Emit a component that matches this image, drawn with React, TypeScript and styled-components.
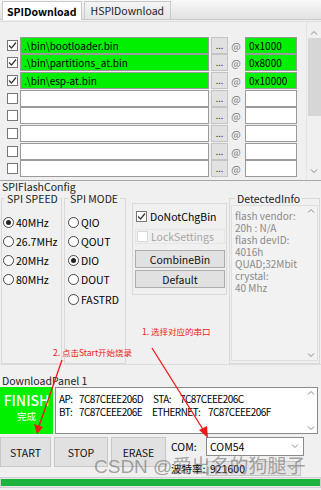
import React from 'react';
import styled, { createGlobalStyle } from 'styled-components';

const GlobalStyle = createGlobalStyle`
  html, body {
    margin: 0;
    padding: 0;
    background: #f0f0f0;
  }
  * {
    box-sizing: border-box;
  }
`;

const FONT = `"Noto Sans CJK SC", "Noto Sans", sans-serif`;

const Window = styled.div`
  position: relative;
  width: 321px;
  height: 490px;
  overflow: hidden;
  background: #f0f0f0;
  font-family: ${FONT};
  font-size: 10px;
  color: #000;
`;

const TabBar = styled.div`
  display: flex;
  align-items: flex-end;
  height: 20px;
  padding-left: 2px;
  background: linear-gradient(#f8f8f8, #e2e2e2);
  border-bottom: 1px solid #c9c9c9;
`;

const Tab = styled.div<{ $active?: boolean }>`
  height: ${(p) => (p.$active ? 19 : 18)}px;
  padding: 0 ${(p) => (p.$active ? 4 : 6)}px;
  margin-right: 2px;
  display: flex;
  align-items: center;
  font-size: 10.5px;
  font-weight: ${(p) => (p.$active ? 700 : 400)};
  background: ${(p) => (p.$active ? '#ffffff' : 'linear-gradient(#f4f4f4, #e6e6e6)')};
  border: 1px solid #c9c9c9;
  border-bottom: none;
  color: ${(p) => (p.$active ? '#000' : '#222')};
  margin-bottom: ${(p) => (p.$active ? -1 : 0)}px;
`;

const FileArea = styled.div`
  display: flex;
  height: 160px;
  margin-top: 1px;
  border-top: 1px solid #dcdcdc;
  border-bottom: 1px solid #a8a8a8;
`;

const FileRows = styled.div`
  flex: 1;
  display: flex;
  flex-direction: column;
  gap: 1.7px;
  padding-top: 15px;
`;

const FileRow = styled.div`
  display: flex;
  align-items: center;
  height: 16px;
`;

const CheckBox = styled.span<{ $checked?: boolean; $disabled?: boolean }>`
  width: 11px;
  height: 11px;
  flex: none;
  display: inline-flex;
  align-items: center;
  justify-content: center;
  background: #fff;
  border: 1px solid ${(p) => (p.$disabled ? '#dadada' : '#777')};
  & svg {
    display: ${(p) => (p.$checked ? 'block' : 'none')};
  }
`;

const RowCheck = styled(CheckBox)`
  margin-left: 7px;
`;

const PathField = styled.div<{ $filled?: boolean }>`
  width: 189px;
  height: 17px;
  margin-left: 2px;
  padding-left: 3px;
  display: flex;
  align-items: center;
  background: ${(p) => (p.$filled ? '#00f000' : '#ffffff')};
  border: 1px solid #9a9a9a;
  white-space: nowrap;
`;

const DotsButton = styled.div`
  width: 17px;
  height: 17px;
  margin-left: 2px;
  display: flex;
  align-items: flex-end;
  justify-content: center;
  padding-bottom: 3px;
  font-size: 9px;
  line-height: 9px;
  background: #e1e1e1;
  border: 1px solid #c4c4c4;
  color: #333;
`;

const AtMark = styled.span`
  width: 14px;
  margin-left: 1px;
  text-align: center;
  font-size: 10px;
  color: #777;
`;

const AddrField = styled(PathField)`
  width: 52px;
  margin-left: 2px;
`;

const ScrollBar = styled.div`
  width: 15px;
  display: flex;
  flex-direction: column;
  align-items: center;
  background: #f0f0f0;
  border-left: 1px solid #e4e4e4;
`;

const ScrollArrow = styled.div`
  height: 12px;
  display: flex;
  align-items: center;
  justify-content: center;
`;

const ScrollThumb = styled.div<{ $h: number }>`
  width: 13px;
  height: ${(p) => p.$h}px;
  background: #d6d6d6;
`;

const ScrollTrack = styled.div`
  flex: 1;
`;

const SectionLabel = styled.div`
  height: 12px;
  line-height: 12px;
  padding-left: 2px;
  font-size: 10.5px;
  color: #222;
`;

const ConfigRow = styled.div`
  display: flex;
  height: 172px;
  padding-left: 1px;
  border-bottom: 1px solid #dcdcdc;
`;

const Group = styled.fieldset<{ $w: number; $ml?: number }>`
  width: ${(p) => p.$w}px;
  margin: 0 0 0 ${(p) => p.$ml || 0}px;
  padding: 0;
  border: 1px solid #d9d9d9;
  display: flex;
  flex-direction: column;
  min-width: 0;
`;

const Legend = styled.legend<{ $ml?: number }>`
  margin-left: ${(p) => p.$ml ?? 3}px;
  padding: 0 2px;
  font-size: 10.5px;
  line-height: 11px;
  color: #222;
  white-space: nowrap;
`;

const RadioList = styled.div`
  display: flex;
  flex-direction: column;
  gap: 5.3px;
  padding: 11px 0 0 1px;
`;

const RadioRow = styled.label`
  display: flex;
  align-items: center;
  height: 14px;
  gap: 2px;
  font-size: 10.5px;
`;

const Radio = styled.span<{ $on?: boolean }>`
  width: 11px;
  height: 11px;
  flex: none;
  border-radius: 50%;
  border: 1px solid #444;
  background: #fff;
  display: flex;
  align-items: center;
  justify-content: center;
  &::after {
    content: '';
    width: 5px;
    height: 5px;
    border-radius: 50%;
    background: ${(p) => (p.$on ? '#222' : 'transparent')};
  }
`;

const OptionsBox = styled.div`
  width: 95px;
  height: 92px;
  margin: 10px 0 0 6px;
  padding: 4px 1px 0 2px;
  border: 1px solid #dadada;
  display: flex;
  flex-direction: column;
  gap: 2px;
`;

const OptionRow = styled.div<{ $disabled?: boolean }>`
  display: flex;
  align-items: center;
  gap: 3px;
  height: 17px;
  padding-left: 1px;
  font-size: 10.5px;
  color: ${(p) => (p.$disabled ? '#a6a6a6' : '#000')};
`;

const LockRow = styled(OptionRow)`
  border: 1px solid #e6e6e6;
  margin-top: 2px;
  height: 15px;
`;

const PlainButton = styled.div<{ $h?: number }>`
  height: ${(p) => p.$h || 18}px;
  display: flex;
  align-items: center;
  justify-content: center;
  background: #e1e1e1;
  border: 1px solid #adadad;
  font-size: 10.5px;
  color: #111;
`;

const InfoArea = styled.div`
  flex: 1;
  margin: 1px 1px 2px 1px;
  display: flex;
  background: #f2f2f2;
  border: 1px solid #dedede;
`;

const InfoText = styled.div`
  flex: 1;
  padding: 4px 0 0 3px;
  font-size: 10px;
  line-height: 12px;
  color: #8a8a8a;
  white-space: nowrap;
`;

const MiniScroll = styled.div`
  width: 12px;
  display: flex;
  flex-direction: column;
  justify-content: space-between;
  align-items: center;
  padding: 2px 0;
`;

const PanelLabel = styled(SectionLabel)`
  margin-top: 10px;
`;

const PanelTop = styled.div`
  display: flex;
  height: 47px;
  gap: 2px;
`;

const FinishBox = styled.div`
  width: 53px;
  display: flex;
  flex-direction: column;
  align-items: center;
  padding-top: 5px;
  background: #00f000;
  color: #fff;
`;

const FinishTitle = styled.div`
  font-size: 14px;
  line-height: 17px;
  font-weight: 500;
`;

const FinishSub = styled.div`
  font-size: 9.5px;
  line-height: 14px;
`;

const MacBox = styled.div`
  flex: 1;
  margin-right: 3px;
  display: flex;
  background: #fff;
  border: 1px solid #8a8a8a;
`;

const MacText = styled.div`
  flex: 1;
  padding: 5px 0 0 3px;
  font-size: 10px;
  line-height: 12.5px;
  letter-spacing: -0.55px;
  white-space: nowrap;
`;

const MacLine = styled.div`
  display: flex;
`;

const MacKey = styled.span<{ $w: number }>`
  width: ${(p) => p.$w}px;
  flex: none;
`;

const BottomRow = styled.div`
  display: flex;
  margin-top: 3px;
  height: 40px;
`;

const ActionButton = styled(PlainButton)<{ $w: number }>`
  width: ${(p) => p.$w}px;
  height: 30px;
  margin-right: 3px;
  border-color: #c8c8c8;
`;

const PortColumn = styled.div`
  display: flex;
  flex-direction: column;
  gap: 5px;
  margin-left: 2px;
`;

const PortRow = styled.div`
  display: flex;
  align-items: center;
`;

const PortLabel = styled.span`
  width: 35px;
  font-size: 10.5px;
  white-space: nowrap;
`;

const Select = styled.div<{ $w: number; $gray?: boolean }>`
  width: ${(p) => p.$w}px;
  height: ${(p) => (p.$gray ? 15 : 19)}px;
  display: flex;
  align-items: center;
  justify-content: space-between;
  padding: 0 4px 0 3px;
  background: ${(p) => (p.$gray ? '#e4e4e4' : '#fff')};
  border: 1px solid ${(p) => (p.$gray ? '#c6c6c6' : '#8a8a8a')};
  font-size: 10.5px;
`;

const Progress = styled.div`
  height: 11px;
  border: 1px solid #cfcfcf;
  background: #e6e6e6;
  padding: 1px 0;
`;

const ProgressFill = styled.div`
  height: 100%;
  background: #1cb43c;
`;

const Overlay = styled.svg`
  position: absolute;
  left: 0;
  top: 0;
  pointer-events: none;
`;

const Note = styled.span<{ $x: number; $y: number }>`
  position: absolute;
  left: ${(p) => p.$x}px;
  top: ${(p) => p.$y}px;
  font-size: 8.5px;
  line-height: 10px;
  color: #f01818;
  white-space: nowrap;
`;

const Watermark = styled.span`
  position: absolute;
  left: 94px;
  top: 455px;
  font-family: "Liberation Sans", "Noto Sans CJK SC", sans-serif;
  font-size: 19px;
  line-height: 24px;
  color: rgba(110, 110, 110, 0.6);
  white-space: nowrap;
  pointer-events: none;
`;

const Tick = () => (
  <svg width="9" height="9" viewBox="0 0 9 9">
    <path d="M1 4.5 L3.5 7 L8 1.5" fill="none" stroke="#333" strokeWidth="1.2" />
  </svg>
);

const Chevron = ({ up }: { up?: boolean }) => (
  <svg width="8" height="5" viewBox="0 0 8 5">
    <path d={up ? 'M1 4.5 L4 1.5 L7 4.5' : 'M1 0.5 L4 3.5 L7 0.5'} fill="none" stroke="#8a8a8a" strokeWidth="1" />
  </svg>
);

const files = [
  { path: '.\\bin\\bootloader.bin', addr: '0x1000' },
  { path: '.\\bin\\partitions_at.bin', addr: '0x8000' },
  { path: '.\\bin\\esp-at.bin', addr: '0x10000' },
  { path: '', addr: '' },
  { path: '', addr: '' },
  { path: '', addr: '' },
  { path: '', addr: '' },
  { path: '', addr: '' },
];

const speeds = [
  { label: '40MHz', on: true },
  { label: '26.7MHz' },
  { label: '20MHz' },
  { label: '80MHz' },
];

const modes = [
  { label: 'QIO' },
  { label: 'QOUT' },
  { label: 'DIO', on: true },
  { label: 'DOUT' },
  { label: 'FASTRD' },
];

const detected = [
  'flash vendor:',
  '20h : N/A',
  'flash devID:',
  '4016h',
  'QUAD;32Mbit',
  'crystal:',
  '40 Mhz',
];

export default function App() {
  return (
    <Window>
      <GlobalStyle />
      <TabBar>
        <Tab $active>SPIDownload</Tab>
        <Tab>HSPIDownload</Tab>
      </TabBar>

      <FileArea>
        <FileRows>
          {files.map((f, i) => (
            <FileRow key={i}>
              <RowCheck $checked={!!f.path}>
                <Tick />
              </RowCheck>
              <PathField $filled={!!f.path}>{f.path}</PathField>
              <DotsButton>...</DotsButton>
              <AtMark>@</AtMark>
              <AddrField $filled={!!f.addr}>{f.addr}</AddrField>
            </FileRow>
          ))}
        </FileRows>
        <ScrollBar>
          <ScrollArrow style={{ marginTop: 4 }}>
            <Chevron up />
          </ScrollArrow>
          <ScrollThumb $h={78} />
          <ScrollTrack />
          <ScrollArrow style={{ marginBottom: 3 }}>
            <Chevron />
          </ScrollArrow>
        </ScrollBar>
      </FileArea>

      <SectionLabel>SPIFlashConfig</SectionLabel>
      <ConfigRow>
        <Group $w={61}>
          <Legend>SPI SPEED</Legend>
          <RadioList>
            {speeds.map((s) => (
              <RadioRow key={s.label}>
                <Radio $on={s.on} />
                {s.label}
              </RadioRow>
            ))}
          </RadioList>
        </Group>
        <Group $w={62} $ml={2}>
          <Legend>SPI MODE</Legend>
          <RadioList style={{ paddingLeft: 3 }}>
            {modes.map((s) => (
              <RadioRow key={s.label}>
                <Radio $on={s.on} />
                {s.label}
              </RadioRow>
            ))}
          </RadioList>
        </Group>
        <OptionsBox>
          <OptionRow>
            <CheckBox $checked>
              <Tick />
            </CheckBox>
            DoNotChgBin
          </OptionRow>
          <LockRow $disabled>
            <CheckBox $disabled />
            LockSettings
          </LockRow>
          <PlainButton style={{ marginTop: 4 }}>CombineBin</PlainButton>
          <PlainButton>Default</PlainButton>
        </OptionsBox>
        <Group $w={91} $ml={2}>
          <Legend $ml={5}>DetectedInfo</Legend>
          <InfoArea>
            <InfoText>
              {detected.map((d) => (
                <div key={d}>{d}</div>
              ))}
            </InfoText>
            <MiniScroll>
              <Chevron up />
              <Chevron />
            </MiniScroll>
          </InfoArea>
        </Group>
      </ConfigRow>

      <PanelLabel>DownloadPanel 1</PanelLabel>
      <PanelTop>
        <FinishBox>
          <FinishTitle>FINISH</FinishTitle>
          <FinishSub>完成</FinishSub>
        </FinishBox>
        <MacBox>
          <MacText>
            <MacLine>
              <MacKey $w={20}>AP:</MacKey>
              <MacKey $w={74}>7C87CEEE206D</MacKey>
              <MacKey $w={27}>STA:</MacKey>
              <span>7C87CEEE206C</span>
            </MacLine>
            <MacLine>
              <MacKey $w={20}>BT:</MacKey>
              <MacKey $w={73}>7C87CEEE206E</MacKey>
              <MacKey $w={56}>ETHERNET:</MacKey>
              <span>7C87CEEE206F</span>
            </MacLine>
          </MacText>
          <MiniScroll>
            <Chevron up />
            <Chevron />
          </MiniScroll>
        </MacBox>
      </PanelTop>

      <BottomRow>
        <ActionButton $w={51}>START</ActionButton>
        <ActionButton $w={54}>STOP</ActionButton>
        <ActionButton $w={55}>ERASE</ActionButton>
        <PortColumn>
          <PortRow>
            <PortLabel>COM:</PortLabel>
            <Select $w={98}>
              COM54
              <Chevron />
            </Select>
          </PortRow>
          <PortRow>
            <PortLabel>波特率:</PortLabel>
            <Select $w={95} $gray>
              921600
              <Chevron />
            </Select>
          </PortRow>
        </PortColumn>
      </BottomRow>
      <Progress>
        <ProgressFill />
      </Progress>

      <Note $x={142} $y={326}>1. 选择对应的串口</Note>
      <Note $x={53} $y={347}>2. 点击Start开始烧录</Note>
      <Overlay width="321" height="490" viewBox="0 0 321 490">
        <line x1="152" y1="348" x2="204" y2="431" stroke="#f01818" strokeWidth="1.3" />
        <polygon points="208,438 199,430 207,426" fill="#f01818" />
        <line x1="62" y1="360" x2="39" y2="426" stroke="#f01818" strokeWidth="1.3" />
        <polygon points="37,434 34,424 43,427" fill="#f01818" />
      </Overlay>
      <Watermark>CSDN @爱出名的狗腿子</Watermark>
    </Window>
  );
}
